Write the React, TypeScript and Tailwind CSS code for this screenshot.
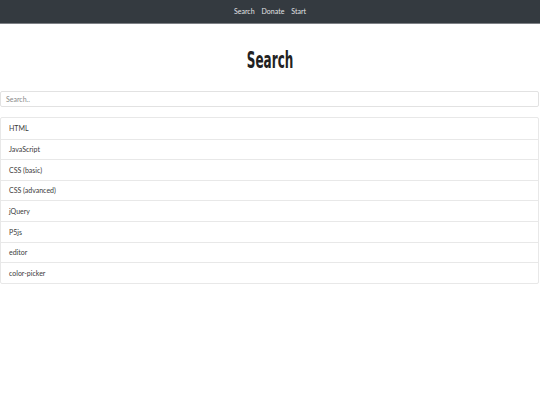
import React from "react";

const items = ["HTML", "JavaScript", "CSS (basic)", "CSS (advanced)", "jQuery", "P5js", "editor", "color-picker"];

export default function App() {
  return (
    <div className="min-h-[405px] bg-white" style={{ fontFamily: "Lato, 'Open Sans', sans-serif" }}>
      <nav className="h-[24px] bg-[#343a40] border-b border-[#7d8085] flex items-center justify-center gap-[7px] text-[7px] text-[#e2e3e5]">
        <span>Search</span>
        <span>Donate</span>
        <span>Start</span>
      </nav>
      <div className="mt-[23px] flex justify-center">
        <h1
          className="text-[23px] font-bold text-[#222] leading-[26px] scale-x-[0.58]"
          style={{ fontFamily: "'DejaVu Sans Condensed', 'DejaVu Sans', sans-serif" }}
        >
          Search
        </h1>
      </div>
      <div className="mt-[18px]">
        <div className="h-[16px] border border-[#e2e2e2] rounded-[2px] mr-[1px] flex items-center px-[5px] text-[7px] text-[#8a8a8a]">
          Search..
        </div>
      </div>
      <ul className="mt-[10px] mr-[1px] border border-[#e8e8e8] rounded-[2px]">
        {items.map((it, i) => (
          <li
            key={it}
            className={`h-[20.6px] flex items-center px-[8px] text-[7px] text-[#3a3a3a] ${i > 0 ? "border-t border-[#e8e8e8]" : ""}`}
          >
            {it}
          </li>
        ))}
      </ul>
    </div>
  );
}
